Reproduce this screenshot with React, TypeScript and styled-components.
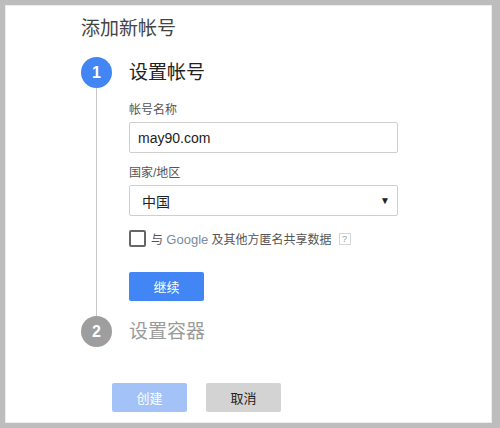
import React from "react";
import styled, { createGlobalStyle } from "styled-components";

const Global = createGlobalStyle`
  html, body { margin: 0; padding: 0; background: #bdbdbd; }
  body { font-family: "Liberation Sans", Arial, "Noto Sans CJK SC", sans-serif; }
  * { box-sizing: border-box; }
`;

const Frame = styled.div`
  width: 500px;
  height: 428px;
  padding: 5px 8px 5px 5px;
  background: #bdbdbd;
`;

const Panel = styled.div`
  height: 100%;
  background: #fff;
  border: 1px solid #ececec;
  padding: 9px 0 0 75px;
  display: flex;
  flex-direction: column;
`;

const Title = styled.h1`
  margin: 0;
  font-size: 19px;
  line-height: 28px;
  font-weight: 400;
  color: #444;
`;

const Steps = styled.div`
  margin-top: 14px;
  display: flex;
  flex-direction: column;
`;

const StepRow = styled.div`
  display: flex;
  gap: 17px;
`;

const Indicator = styled.div`
  width: 31px;
  display: flex;
  flex-direction: column;
  align-items: center;
`;

const Circle = styled.div<{ $active: boolean }>`
  width: 31px;
  height: 31px;
  border-radius: 50%;
  background: ${(p) => (p.$active ? "#4285f4" : "#9e9e9e")};
  color: #fff;
  font-size: 16px;
  font-weight: 700;
  display: flex;
  align-items: center;
  justify-content: center;
  flex-shrink: 0;
`;

const Line = styled.div`
  flex: 1;
  width: 1px;
  background: #c8c8c8;
`;

const StepBody = styled.div<{ $last?: boolean }>`
  display: flex;
  flex-direction: column;
  padding-bottom: ${(p) => (p.$last ? "0" : "15px")};
`;

const StepTitle = styled.div<{ $active: boolean }>`
  height: 31px;
  line-height: 31px;
  font-size: 19px;
  color: ${(p) => (p.$active ? "#222" : "#9a9a9a")};
`;

const Label = styled.div<{ $top: number }>`
  margin-top: ${(p) => p.$top}px;
  font-size: 12px;
  line-height: 16px;
  color: #555;
`;

const Field = styled.div<{ $top: number }>`
  margin-top: ${(p) => p.$top}px;
  width: 269px;
  height: 31px;
  border: 1px solid #cfcfcf;
  border-radius: 2px;
  padding: 0 7px 0 8px;
  display: flex;
  align-items: center;
  justify-content: space-between;
  font-size: 14px;
  color: #222;
`;

const SelectText = styled.span`
  padding-left: 4px;
`;

const Arrow = styled.span`
  font-size: 10px;
  color: #222;
`;

const CheckRow = styled.div`
  margin-top: 14px;
  display: flex;
  align-items: center;
  gap: 5px;
  font-size: 12px;
  color: #555;
`;

const Check = styled.span`
  width: 17px;
  height: 17px;
  border: 2px solid #666;
  border-radius: 2px;
  flex-shrink: 0;
`;

const Brand = styled.span`
  font-size: 13px;
  color: #7a8ba3;
`;

const Help = styled.span`
  margin-left: 2px;
  width: 12px;
  height: 12px;
  border: 1px solid #d6d6d6;
  font-size: 9px;
  line-height: 10px;
  text-align: center;
  color: #999;
`;

const Button = styled.button<{ $variant: "primary" | "disabled" | "secondary" }>`
  width: 75px;
  height: 29px;
  border: none;
  border-radius: 2px;
  font-family: inherit;
  font-size: 13px;
  padding: 0;
  background: ${(p) =>
    p.$variant === "primary" ? "#4285f4" : p.$variant === "disabled" ? "#a3c3f8" : "#d3d3d3"};
  color: ${(p) => (p.$variant === "secondary" ? "#222" : "#fff")};
`;

const ContinueWrap = styled.div`
  margin-top: 25px;
`;

const Footer = styled.div`
  margin: 36px 0 0 31px;
  display: flex;
  gap: 19px;
`;

export default function App() {
  return (
    <>
      <Global />
      <Frame>
        <Panel>
          <Title>添加新帐号</Title>
          <Steps>
            <StepRow>
              <Indicator>
                <Circle $active>1</Circle>
                <Line />
              </Indicator>
              <StepBody>
                <StepTitle $active>设置帐号</StepTitle>
                <Label $top={14}>帐号名称</Label>
                <Field $top={4}>may90.com</Field>
                <Label $top={12}>国家/地区</Label>
                <Field $top={4}>
                  <SelectText>中国</SelectText>
                  <Arrow>▼</Arrow>
                </Field>
                <CheckRow>
                  <Check />
                  <span>
                    与 <Brand>Google</Brand> 及其他方匿名共享数据
                  </span>
                  <Help>?</Help>
                </CheckRow>
                <ContinueWrap>
                  <Button $variant="primary">继续</Button>
                </ContinueWrap>
              </StepBody>
            </StepRow>
            <StepRow>
              <Indicator>
                <Circle $active={false}>2</Circle>
              </Indicator>
              <StepBody $last>
                <StepTitle $active={false}>设置容器</StepTitle>
              </StepBody>
            </StepRow>
          </Steps>
          <Footer>
            <Button $variant="disabled">创建</Button>
            <Button $variant="secondary">取消</Button>
          </Footer>
        </Panel>
      </Frame>
    </>
  );
}
